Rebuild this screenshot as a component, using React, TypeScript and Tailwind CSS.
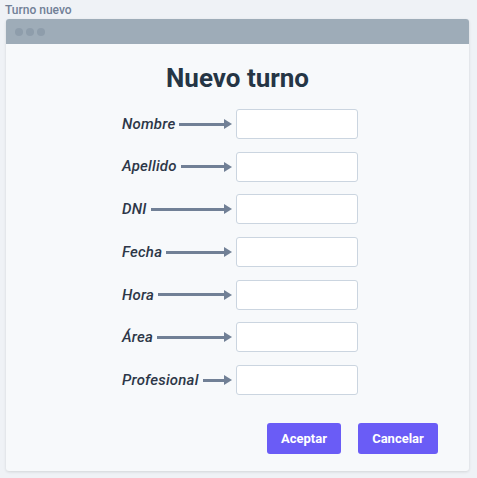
import React from "react";

const fields = ["Nombre", "Apellido", "DNI", "Fecha", "Hora", "Área", "Profesional"];

function Arrow() {
  return (
    <div className="flex-1 flex items-center">
      <div className="flex-1 h-[3px] bg-[#718096]" />
      <svg width="8" height="10" viewBox="0 0 8 10" className="block">
        <polygon points="0,0 8,5 0,10" fill="#718096" />
      </svg>
    </div>
  );
}

export default function App() {
  return (
    <div className="w-[477px] h-[478px] bg-[#eff2f6] pt-[3px] overflow-hidden" style={{ fontFamily: "Roboto, 'Noto Sans', sans-serif" }}>
      <div className="pl-[5px] text-[12px] font-medium leading-[14px] text-[#718096]">Turno nuevo</div>
      <div className="ml-[6px] mt-[2px] w-[463px] h-[452px] rounded-[3px] bg-[#f7f9fb] shadow-[0_1px_3px_rgba(0,0,0,0.12)] flex flex-col overflow-hidden">
        <div className="h-[25px] bg-[#9eacb8] flex items-center gap-[3px] pl-[9px]">
          <span className="w-[8px] h-[8px] rounded-full bg-[#8e9dab]" />
          <span className="w-[8px] h-[8px] rounded-full bg-[#8e9dab]" />
          <span className="w-[8px] h-[8px] rounded-full bg-[#8e9dab]" />
        </div>
        <h1 className="mt-[19px] text-center text-[26px] leading-[30px] font-bold text-[#253545]">Nuevo turno</h1>
        <div className="mt-[16px] ml-[116px] w-[236px] flex flex-col gap-[12.7px]">
          {fields.map((f) => (
            <div key={f} className="flex items-center h-[30px] gap-[4px]">
              <span className="italic font-medium text-[15px] tracking-[0.2px] text-[#2d3748]">{f}</span>
              <Arrow />
              <div className="w-[122px] h-[30px] bg-white border border-[#cbd5e0] rounded-[3px]" />
            </div>
          ))}
        </div>
        <div className="mt-[28px] flex justify-end gap-[17px] pr-[31px]">
          <button className="w-[74px] h-[31px] rounded-[3px] bg-[#6a5cf6] text-white text-[13px] font-bold">Aceptar</button>
          <button className="w-[80px] h-[31px] rounded-[3px] bg-[#6a5cf6] text-white text-[13px] font-bold">Cancelar</button>
        </div>
      </div>
    </div>
  );
}
